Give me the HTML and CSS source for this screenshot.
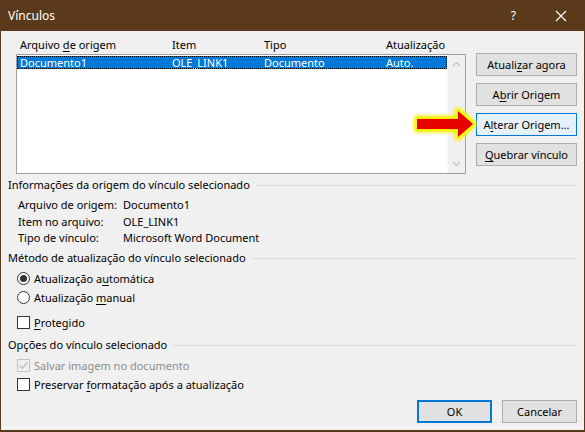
FILE: index.html
```html
<!DOCTYPE html>
<html lang="pt">
<head>
<meta charset="utf-8">
<link rel="stylesheet" href="styles.css">
</head>
<body>
<div class="window">
  <div class="titlebar">
    <span class="title">Vínculos</span>
    <span class="help">?</span>
    <svg class="close" width="12" height="12" viewBox="0 0 12 12"><path d="M1 1L11 11M11 1L1 11" stroke="#fff" stroke-width="1.2"/></svg>
  </div>
  <div class="content">
    <div class="top">
      <div class="listcol">
        <div class="cols head">
          <span>Arquivo <u>d</u>e origem</span><span>Item</span><span>Tipo</span><span>Atualização</span>
        </div>
        <div class="listbox">
          <div class="rows">
            <div class="cols row sel">
              <span>Documento1</span><span>OLE_LINK1</span><span>Documento</span><span>Auto.</span>
            </div>
          </div>
          <div class="scroll">
            <svg width="9" height="6" viewBox="0 0 9 6"><path d="M1 5L4.5 1.5L8 5" fill="none" stroke="#c2c2c2" stroke-width="1.2"/></svg>
            <svg width="9" height="6" viewBox="0 0 9 6"><path d="M1 1L4.5 4.5L8 1" fill="none" stroke="#c2c2c2" stroke-width="1.2"/></svg>
          </div>
        </div>
      </div>
      <div class="btncol">
        <div class="btn">Atuali<u>z</u>ar agora</div>
        <div class="btn">A<u>b</u>rir Origem</div>
        <div class="btn focus">A<u>l</u>terar Origem...</div>
        <div class="btn"><u>Q</u>uebrar vínculo</div>
      </div>
    </div>

    <div class="group g1"><span>Informações da origem do vínculo selecionado</span><i></i></div>
    <div class="info">
      <div class="irow"><span class="lbl">Arquivo de origem:</span><span>Documento1</span></div>
      <div class="irow"><span class="lbl">Item no arquivo:</span><span>OLE_LINK1</span></div>
      <div class="irow"><span class="lbl">Tipo de vínculo:</span><span>Microsoft Word Document</span></div>
    </div>

    <div class="group g2"><span>Método de atualização do vínculo selecionado</span><i></i></div>
    <div class="opts radios">
      <div class="opt"><span class="radio on"></span><span>Atualização a<u>u</u>tomática</span></div>
      <div class="opt"><span class="radio"></span><span>Atualização <u>m</u>anual</span></div>
    </div>
    <div class="opt prot"><span class="check"></span><span><u>P</u>rotegido</span></div>

    <div class="group g3"><span>Opções do vínculo selecionado</span><i></i></div>
    <div class="opts checks">
      <div class="opt disabled"><span class="check">
        <svg width="11" height="11" viewBox="0 0 11 11"><path d="M1.5 5.5L4.2 8.3L9.6 2.5" fill="none" stroke="#bfbfbf" stroke-width="1.4"/></svg>
      </span><span>Salvar imagem no documento</span></div>
      <div class="opt"><span class="check"></span><span>Preservar <u>f</u>ormatação após a atualização</span></div>
    </div>

    <div class="footer">
      <div class="btn dflt">OK</div>
      <div class="btn">Cancelar</div>
    </div>
  </div>
  <svg class="arrow" width="72" height="40" viewBox="0 0 72 40">
    <defs><filter id="glow" x="-20%" y="-30%" width="140%" height="160%"><feGaussianBlur stdDeviation="1.8"/></filter></defs>
    <polygon points="7,15 48,15 48,7 63,20 48,33 48,25 7,25" fill="#f4f000" stroke="#fbf400" stroke-width="7" stroke-linejoin="round" filter="url(#glow)"/>
    <polygon points="7,15 48,15 48,7 63,20 48,33 48,25 7,25" fill="#e80000" stroke="#fff200" stroke-width="2.5" stroke-linejoin="miter" paint-order="stroke"/>
  </svg>
</div>
</body>
</html>
```

FILE: styles.css
```css
* { box-sizing: border-box; }
html, body { margin: 0; padding: 0; }
body {
  font-family: "Noto Sans", "Open Sans", sans-serif;
  font-size: 11px;
  color: #000;
  background: #5b3a1c;
}
u { text-decoration-thickness: 1px; text-underline-offset: 2px; }
.window {
  position: relative;
  width: 585px;
  height: 432px;
  background: #f0f0f0;
  border: 1px solid #5b3a1c;
  border-top: 0;
  border-bottom-width: 2px;
  display: flex;
  flex-direction: column;
}
.titlebar {
  height: 31px;
  background: #5b3a1c;
  color: #fff;
  display: flex;
  align-items: center;
  padding-left: 7px;
  flex: none;
}
.title { font-size: 12px; flex: 1; }
.help { font-size: 12px; margin-right: 39px; }
.close { margin-right: 17px; }

.content {
  flex: 1;
  padding: 6px 7px 0 7px;
  display: flex;
  flex-direction: column;
  border-bottom: 1px solid #fbfbfb;
  margin-bottom: 2px;
  white-space: nowrap;
}
.top { display: flex; gap: 10px; }
.listcol { margin-left: 8px; width: 450px; }
.cols {
  display: grid;
  grid-template-columns: 152px 92px 122px 1fr;
  line-height: 16px;
  white-space: nowrap;
}
.head { padding-left: 4px; height: 16px; margin-bottom: 1px; }
.listbox {
  height: 120px;
  border: 1px solid #a0a0a0;
  background: #fff;
  display: flex;
}
.rows { flex: 1; padding-top: 1px; }
.row { padding-left: 3px; line-height: 13px; height: 13px; }
.sel { background: #0078d7; color: #fff; outline: 1px dotted #000; outline-offset: -1px; }
.scroll {
  width: 18px;
  background: #f0f0f0;
  border-left: 1px solid #f7f7f7;
  display: flex;
  flex-direction: column;
  justify-content: space-between;
  align-items: center;
  padding: 6px 0 6px;
}
.btncol {
  margin-top: 16px;
  display: flex;
  flex-direction: column;
  gap: 7px;
  width: 101px;
}
.btn {
  height: 23px;
  border: 1px solid #adadad;
  background: #e1e1e1;
  display: flex;
  align-items: center;
  justify-content: center;
  white-space: nowrap;
}
.btn.focus { border-color: #0078d7; background: #e5f1fb; }
.btn.dflt { border: 2px solid #0078d7; }

.group { display: flex; align-items: center; line-height: 16px; height: 16px; }
.group i { flex: 1; border-top: 1px solid #dcdcdc; margin-left: 6px; margin-top: 1px; }
.g1 { margin-top: 3px; }
.g2 { margin-top: 3px; }
.g3 { margin-top: 5px; }
.info { margin-top: 4px; padding-left: 10px; }
.irow { display: flex; line-height: 16.5px; height: 16.5px; }
.lbl { width: 105px; flex: none; }
.opts { display: flex; flex-direction: column; }
.radios { margin-top: 3px; }
.checks { margin-top: 3px; }
.opt { display: flex; align-items: center; height: 19px; padding-left: 9px; gap: 4px; }
.prot { margin-top: 6px; }
.radio {
  width: 13px; height: 13px; border: 1px solid #333; border-radius: 50%;
  background: #fff; display: flex; align-items: center; justify-content: center; flex: none;
}
.radio.on::after { content: ""; width: 7px; height: 7px; border-radius: 50%; background: #333; }
.check {
  width: 13px; height: 13px; border: 1px solid #333; background: #fff; flex: none;
  display: flex; align-items: center; justify-content: center;
}
.disabled { color: #8d8d8d; }
.disabled .check { border-color: #c4c4c4; background: #f0f0f0; }
.footer {
  margin-top: auto;
  margin-bottom: 4px;
  display: flex;
  justify-content: flex-end;
  gap: 10px;
}
.footer .btn { width: 75px; }
.arrow { position: absolute; left: 409px; top: 104px; }
```
